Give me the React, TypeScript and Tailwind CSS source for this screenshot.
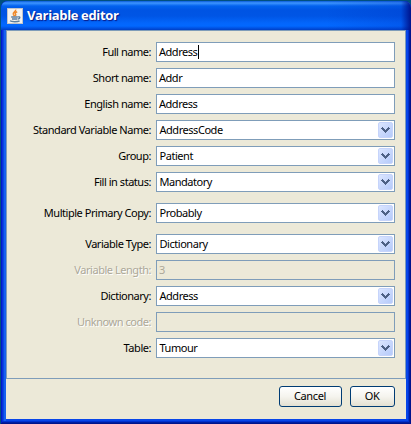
import React from "react";

type Kind = "text" | "select" | "disabled";

interface Row {
  label: string;
  value: string;
  kind: Kind;
  spacing: string;
  caret?: boolean;
}

const rows: Row[] = [
  { label: "Full name:", value: "Address", kind: "text", spacing: "", caret: true },
  { label: "Short name:", value: "Addr", kind: "text", spacing: "mt-[6px]" },
  { label: "English name:", value: "Address", kind: "text", spacing: "mt-[6px]" },
  { label: "Standard Variable Name:", value: "AddressCode", kind: "select", spacing: "mt-[6px]" },
  { label: "Group:", value: "Patient", kind: "select", spacing: "mt-[6px]" },
  { label: "Fill in status:", value: "Mandatory", kind: "select", spacing: "mt-[6px]" },
  { label: "Multiple Primary Copy:", value: "Probably", kind: "select", spacing: "mt-[11px]" },
  { label: "Variable Type:", value: "Dictionary", kind: "select", spacing: "mt-[11px]" },
  { label: "Variable Length:", value: "3", kind: "disabled", spacing: "mt-[6px]" },
  { label: "Dictionary:", value: "Address", kind: "select", spacing: "mt-[6px]" },
  { label: "Unknown code:", value: "", kind: "disabled", spacing: "mt-[6px]" },
  { label: "Table:", value: "Tumour", kind: "select", spacing: "mt-[6px]" },
];

function JavaIcon() {
  return (
    <svg width="16" height="16" viewBox="0 0 16 16" className="shrink-0">
      <rect x="0.5" y="0.5" width="15" height="15" fill="#f4f3ee" stroke="#c3c5c8" />
      <path d="M8.6 1.6C9.4 3.6 5.2 4.4 6.4 6.6L7.6 8.2M10.2 3.8C8 4.8 7.8 5.6 8.7 6.6L8.4 8" fill="none" stroke="#ee8a2c" strokeWidth="1.5" />
      <path d="M4.2 9H10.8M5 11H10.4M11 8.9C13.6 8.3 13.4 10.6 10.9 11.2" fill="none" stroke="#5d7f9e" strokeWidth="1.3" />
      <path d="M3 12.8C4.5 14 10.8 14 12.6 12.8" fill="none" stroke="#5d7f9e" strokeWidth="1.4" />
    </svg>
  );
}

function DropButton() {
  return (
    <span className="flex h-4 w-[15px] shrink-0 items-center justify-center rounded-[2px] border border-[#c6d4fb] bg-linear-to-br from-[#dce6ff] to-[#b5cafa]">
      <svg width="9" height="6" viewBox="0 0 9 6" shapeRendering="crispEdges">
        <path d="M1 0h1v1h1v1h1v1h1v-1h1v-1h1v-1h1v1h1v1h-1v1h-1v1h-1v1h-1v1h-1v-1h-1v-1h-1v-1h-1v-1h-1v-1h1z" fill="#4d6185" />
      </svg>
    </span>
  );
}

function FieldRow({ label, value, kind, spacing, caret }: Row) {
  const off = kind === "disabled";
  return (
    <div className={`flex h-5 shrink-0 items-center ${spacing}`}>
      <span
        className={`w-[149px] whitespace-nowrap pr-[5px] text-right ${
          off ? "text-[#aca899] [text-shadow:1px_1px_0_#fff]" : "text-black"
        }`}
      >
        {label}
      </span>
      <div
        className={`flex h-5 w-[239px] items-center border border-[#7f9db9] pr-px ${
          off ? "bg-[#ece9d8] text-[#aca899]" : "bg-white text-black"
        } ${kind === "select" ? "pl-[2.5px]" : "pl-[2px]"}`}
      >
        <span className="whitespace-nowrap">{value}</span>
        {caret && <span className="ml-px h-[14px] w-px bg-black" />}
        {kind === "select" && (
          <span className="ml-auto">
            <DropButton />
          </span>
        )}
      </div>
    </div>
  );
}

function DialogButton({ label, size }: { label: string; size: string }) {
  return (
    <button
      className={`flex h-[21px] items-center justify-center rounded-[3px] border border-[#003c74] bg-linear-to-b from-white via-[#f5f4ee] to-[#e3e0d2] ${size}`}
    >
      <span className="pb-px pr-px tracking-[-0.35px]">{label}</span>
    </button>
  );
}

export default function App() {
  return (
    <div className="h-[424px] w-[411px] bg-[#00507f] pl-px pt-px font-['Noto_Sans','DejaVu_Sans',sans-serif] text-[11px] leading-[14px] tracking-[-0.46px]">
      <div className="flex h-[423px] w-[410px] flex-col overflow-hidden rounded-t-[7px] bg-[#0846e8] shadow-[inset_0_-1px_0_#00138c,inset_-1px_0_0_#00138c,inset_1px_0_0_#0019cf,inset_0_-2px_0_#001ea0,inset_-2px_0_0_#001ea0,inset_0_-3px_0_#0030d0,inset_-3px_0_0_#0030d0,inset_2px_0_0_#0831d9,inset_3px_0_0_#0a45e4,inset_5px_0_0_#1661ee]">
        <div className="flex h-[29px] shrink-0 items-center gap-1 bg-[linear-gradient(to_right,transparent_325px,#0030c040_400px,#00138c_410px),linear-gradient(to_bottom,#0a5cd8_0,#3d95ff_2px,#0262ee_5px,#0054e3_9px,#0055e5_15px,#0366fb_22px,#0268ff_25px,#0049d6_28px,#003fc4_29px)] pl-[6px]">
          <JavaIcon />
          <span className="whitespace-nowrap pb-px font-['Open_Sans','Noto_Sans',sans-serif] text-[13px] font-bold tracking-[-0.35px] text-white [text-shadow:1px_1px_1px_#0a1883]">
            Variable editor
          </span>
        </div>
        <div className="ml-[5px] flex h-[389px] w-[400px] shrink-0 flex-col bg-[#ece9d8]">
          <div className="flex h-[349px] shrink-0 flex-col border border-[#7f9db9] pt-[11px]">
            {rows.map((row) => (
              <FieldRow key={row.label} {...row} />
            ))}
          </div>
          <div className="flex justify-end gap-2 pr-[11px] pt-[7px]">
            <DialogButton label="Cancel" size="w-[63px]" />
            <DialogButton label="OK" size="w-[45px]" />
          </div>
        </div>
      </div>
    </div>
  );
}
